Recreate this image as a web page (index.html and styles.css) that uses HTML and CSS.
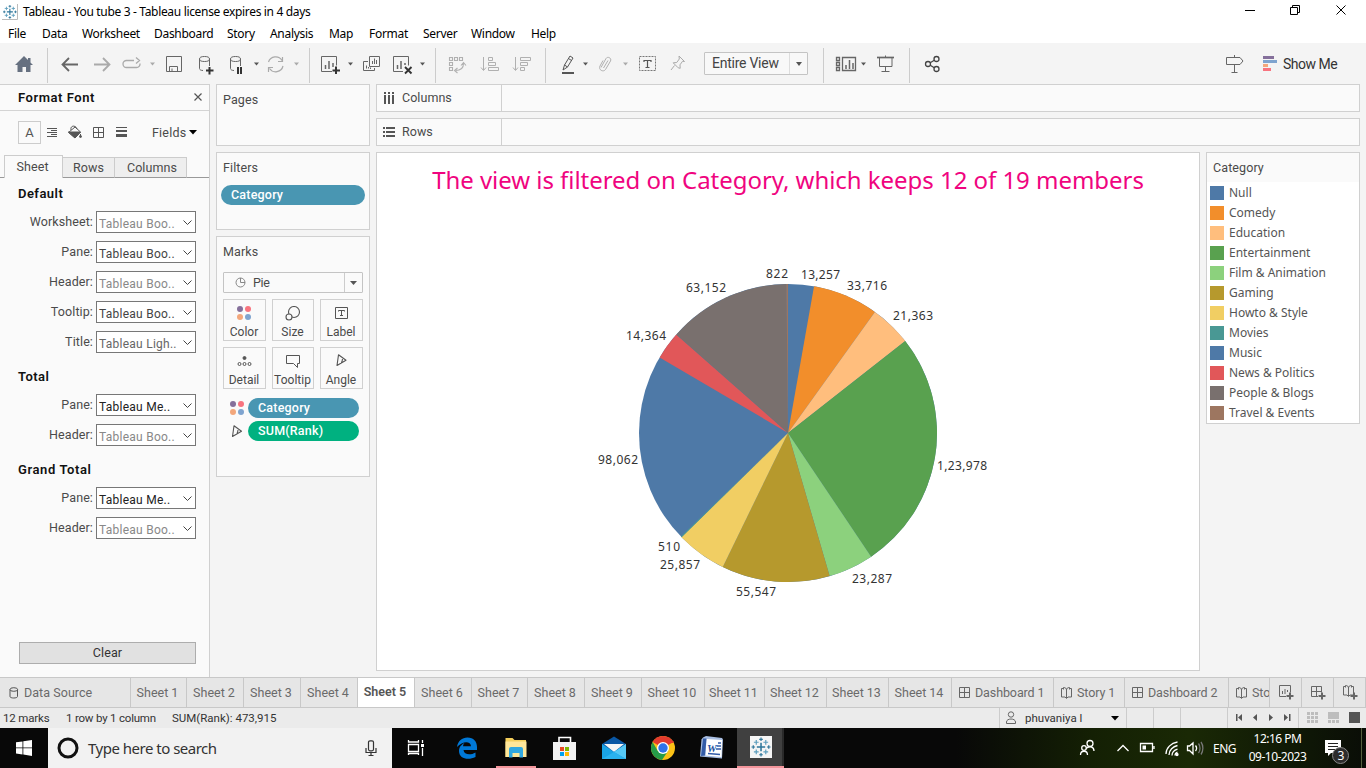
FILE: index.html
```html
<!DOCTYPE html>
<html lang="en">
<head>
<meta charset="utf-8">
<title>Tableau - You tube 3</title>
<link rel="stylesheet" href="styles.css">
</head>
<body>
<svg width="0" height="0" class="defs">
  <defs>
    <g id="tableau" fill="none" stroke="#2d7599">
      <path d="M8 4.500v7M4.500 8h7" stroke-width="1.300"/>
      <path d="M8 0v3M6.500 1.500h3M8 13v3M6.500 14.500h3M0 8h3M1.500 6.500v3M13 8h3M14.500 6.500v3"/>
      <path d="M4 2v4M2 4h4M12 2v4M10 4h4M4 10v4M2 12h4M12 10v4M10 12h4" stroke="#5b9dbd"/>
    </g>
    <g id="dots"><circle cx="3" cy="3" r="3" fill="#85709b"/><circle cx="11" cy="3" r="3" fill="#f8747f"/><circle cx="3" cy="11" r="3" fill="#f3a77c"/><circle cx="11" cy="11" r="3" fill="#7fa4cf"/></g>
    <g id="angle"><path d="M2.500.8L10 6.200 1 11.500zM6.500 3.500c.2 1.600-.3 4-1.200 5.800" fill="none" stroke="#555" stroke-width="1.100" stroke-linejoin="round"/></g>
    <g id="grid"><path d="M.5.5h10v10h-10zM5.500.5v10M.5 5.500h10" fill="none" stroke="#666"/></g>
    <g id="book"><path d="M.5 1.500v8.500h3.500l1.500 1.500L7 10h3.500V1.500M2.500.5c2 0 3 1 3 2.500v8M8.500.5c-2 0-3 1-3 2.500M2.500.5v2M8.500.5v2M.5 1.500h2M8.500 1.500h2" fill="none" stroke="#666"/></g>
    <path id="caret" d="M0 0h5L2.500 3z"/>
  </defs>
</svg>

<header class="titlebar">
  <svg class="app-icon" width="16" height="16" viewBox="0 0 16 16"><path d="M15.500 0v15.500H0" fill="none" stroke="#bbb"/><g transform="translate(1 1) scale(.86)"><use href="#tableau"/></g></svg>
  <span class="win-title">Tableau - You tube 3 - Tableau license expires in 4 days</span>
  <svg class="win-controls" width="126" height="22" viewBox="1240 0 126 22" fill="none" stroke="#000"><path d="M1245 10.500h10M1290.500 7.500h7v7h-7zM1292.500 7.500v-2h7v7h-2M1336.500 5.500l9 9M1345.500 5.500l-9 9"/></svg>
</header>

<nav class="menubar">
  <span class="m-file">File</span><span class="m-data">Data</span><span class="m-work">Worksheet</span><span class="m-dash">Dashboard</span><span class="m-story">Story</span><span class="m-ana">Analysis</span><span class="m-map">Map</span><span class="m-format">Format</span><span class="m-server">Server</span><span class="m-window">Window</span><span>Help</span>
</nav>

<div class="toolbar">
  <svg width="47" height="41" viewBox="0 43 47 41"><path d="M24 56l-9 9h2.500v7h5v-5h3.500v5h4.500v-7H33l-2.500-2.600V58H28v2z" fill="#667080"/></svg>
  <i class="sep"></i>
  <svg width="261" height="41" viewBox="48 43 261 41" fill="none" stroke="#666">
    <path d="M63 64.500h15M69 58l-6.500 6.500 6.500 6.500" stroke-width="1.800"/>
    <g stroke="#aaa"><path d="M94 64.500h15M103 58l6.500 6.500-6.500 6.500" stroke-width="1.800"/>
    <path d="M134 60.500h-7.500a3.500 3.500 0 0 0 0 7h10a3.500 3.500 0 0 0 3.500-4M136 57.500l3.500 3-3.500 3" stroke-width="1.300"/></g>
    <use href="#caret" x="150" y="62.500" fill="#aaa" stroke="none"/>
    <path d="M166.500 56.500h15v15h-15zM169.500 71v-4.500h8v4.500M172 71v-2.500"/>
    <path d="M199.500 59v9.500c0 1.200 1.500 2 3.500 2M209.500 59v7"/><ellipse cx="204.500" cy="59" rx="5" ry="2.500"/>
    <path d="M209.500 67v7.500M206 70.500h7.500" stroke="#333" stroke-width="2"/>
    <path d="M230.500 59v9.500c0 1.200 1.500 2 3.500 2M240.500 59v7"/><ellipse cx="235.500" cy="59" rx="5" ry="2.500"/>
    <path d="M238 67v7M241 67v7" stroke="#333" stroke-width="2"/>
    <use href="#caret" x="254" y="62.500" fill="#555" stroke="none"/>
    <path d="M268.500 62a7.500 7.500 0 0 1 13.500-1.500M283 66a7.500 7.500 0 0 1-13.500 2.500M282.500 57v4.500h-4.500M268.500 72v-4.500h4.500" stroke="#aaa" stroke-width="1.200"/>
    <use href="#caret" x="294" y="62.500" fill="#aaa" stroke="none"/>
  </svg>
  <i class="sep"></i>
  <svg width="125" height="41" viewBox="310 43 125 41" fill="none" stroke="#666">
    <path d="M332 71.500h-10.500v-15h15v9"/><path d="M325.500 65v4M329 61v8M333 63v4" stroke-width="1.500"/>
    <path d="M336 66.500v7.500M332.500 70.500h7.500" stroke="#333" stroke-width="2"/>
    <use href="#caret" x="348" y="62.500" fill="#555" stroke="none"/>
    <path d="M369.500 56.500h10v10h-10zM368 61.500h-4.500v9h11v-2.500M372.500 61v3M374.500 58.500v5.500M376.500 60v4M366.500 65.500v3M368.500 67v1.500M370.500 67.500v1.500"/>
    <path d="M403 71.500h-9.500v-15h15v9"/><path d="M397.500 65v4M401 61v8M405 63v2" stroke-width="1.500"/>
    <path d="M405 67l6.500 6.500M411.500 67L405 73.500" stroke="#333" stroke-width="1.900"/>
    <use href="#caret" x="420" y="62.500" fill="#555" stroke="none"/>
  </svg>
  <i class="sep"></i>
  <svg width="109" height="41" viewBox="436 43 109 41" fill="none" stroke="#b0b0b0">
    <path d="M449.500 57.500h3v3h-3zM454.500 57.500h3v3h-3zM459.500 57.500h3v3h-3zM449.500 62.500h3v3h-3zM449.500 67.500h3v3h-3zM463.500 63.500c0 4-2.500 7-8 7M461 65.500l2.500-3 2.500 3M457.500 68l-3 2.500 3 2.500" stroke-width="1.100"/>
    <path d="M483.500 57v13M481 67.500l2.500 3 2.500-3M488.500 57.500h4v3h-4zM488.500 62.500h7v3h-7zM488.500 67.500h10v3h-10z"/>
    <path d="M515.500 57v13M513 67.500l2.500 3 2.500-3M520.500 57.500h10v3h-10zM520.500 62.500h7v3h-7zM520.500 67.500h4v3h-4z"/>
  </svg>
  <i class="sep"></i>
  <svg width="158" height="41" viewBox="546 43 158 41" fill="none" stroke="#555">
    <path d="M563 70l1.500-5 5.500-9 3 2-5.500 9zM564.500 65l3 2M568.500 58.500l3 2"/><path d="M562 73h12" stroke-width="2"/>
    <use href="#caret" x="583" y="62.500" fill="#555" stroke="none"/>
    <path d="M601 67.500l5-9c1.500-2.500 6-.5 4.500 2.500l-5 8.500c-2 3-7.500.5-5.500-3.500l3-5.500M603.500 68l4.500-7.500" stroke="#b0b0b0"/>
    <use href="#caret" x="623" y="62.500" fill="#aaa" stroke="none"/>
    <path d="M639.500 56.500h16v14h-16z" stroke="#777" stroke-dasharray="2 1"/><path d="M644 62v-1.500h7V62M647.500 60.500v7M645.500 67.500h4" stroke-width="1.200"/>
    <path d="M679 56l5.500 5.500-2-.2-2.500 3.500.2 3.500-2-.5-5-5 3.500-.3 2.600-3.500zM674.500 65.500l-3.500 4.500" stroke="#aaa"/>
  </svg>
  <div class="view-select"><span>Entire View</span><b><svg width="6" height="4"><path d="M0 0h6L3 4z" fill="#555"/></svg></b></div>
  <i class="sep sep-view"></i>
  <svg width="85" height="41" viewBox="824 43 85 41" fill="none" stroke="#666">
    <path d="M836.500 57.500h3v3h-3zM836.500 62.500h3v3h-3zM836.500 67.500h3v3h-3zM842.500 57.500h13v13h-13z" stroke-width="1.300"/><path d="M846 65v4M849.500 60v9M853 63v6" stroke-width="1.500"/>
    <use href="#caret" x="861" y="62.500" fill="#555" stroke="none"/>
    <path d="M877 57.500h17" stroke-width="1.700"/><path d="M879.500 58v8.500h12.500V58M885.500 67v4M881.500 71.500h8M885.500 55.500v2"/>
  </svg>
  <i class="sep"></i>
  <svg width="60" height="41" viewBox="910 43 60 41" fill="none" stroke="#444" stroke-width="1.300"><circle cx="928" cy="64" r="2.500"/><circle cx="936.500" cy="59" r="2.500"/><circle cx="936.500" cy="69" r="2.500"/><path d="M930.200 62.800l4.100-2.500M930.200 65.200l4.100 2.500"/></svg>
  <svg class="toolbar-right" width="60" height="41" viewBox="1222 43 60 41" fill="none"><path d="M1226.500 57.500h13.500l3 3.500-3 3.500h-13.500zM1234.500 55v2M1234.500 65v7M1231.500 72.500h6" stroke="#666"/><path d="M1263 56h11v3h-11z" fill="#85709b"/><path d="M1263 60h14v3h-14z" fill="#7fa4cf"/><path d="M1263 64h5v3h-5z" fill="#f3a77c"/><path d="M1263 68h8v3h-8z" fill="#f8747f"/></svg>
  <span class="show-me">Show Me</span>
</div>

<main class="workspace">
  <aside class="format">
    <div class="format-head"><strong>Format Font</strong><svg width="8" height="8"><path d="M.5.5l7 7M7.500.5l-7 7" stroke="#555" stroke-width="1.200"/></svg></div>
    <div class="format-tools">
      <span class="font-btn">A</span>
      <svg width="108" height="24" viewBox="41 120 108 24" fill="none" stroke="#555">
        <path d="M47 128.500h10M51 130.500h6M47 132.500h10M51 134.500h6M47 136.500h10"/>
        <path d="M68.500 132.500l6.500-5.500 5.500 5-5.500 6z"/><path d="M68.500 132h12l-5.500 6z" fill="#555"/><path d="M71 130c-1-5 5-5 6-1M80.500 134v3" /><circle cx="80.500" cy="136.500" r="1" fill="#555"/>
        <path d="M93.500 127.500h10v10h-10zM98.500 127.500v10M93.500 132.500h10"/>
        <path d="M116 127.500h11"/><path d="M116 131h11" stroke-width="2"/><path d="M116 135.500h11" stroke-width="3"/>
      </svg>
      <span class="fields">Fields</span><svg width="8" height="5"><path d="M0 0h8L4 4.500z"/></svg>
    </div>
    <div class="format-tabs"><i class="lead"></i><span class="on">Sheet</span><span class="t-rows">Rows</span><span class="t-cols">Columns</span><i class="tail"></i></div>
    <section class="first"><h3>Default</h3>
      <div class="field"><label>Worksheet:</label><div class="sel dim">Tableau Boo..</div></div>
      <div class="field"><label>Pane:</label><div class="sel">Tableau Boo..</div></div>
      <div class="field"><label>Header:</label><div class="sel dim">Tableau Boo..</div></div>
      <div class="field"><label>Tooltip:</label><div class="sel">Tableau Boo..</div></div>
      <div class="field"><label>Title:</label><div class="sel mid">Tableau Ligh..</div></div>
    </section>
    <section><h3>Total</h3>
      <div class="field"><label>Pane:</label><div class="sel med">Tableau Me..</div></div>
      <div class="field"><label>Header:</label><div class="sel dim">Tableau Boo..</div></div>
    </section>
    <section><h3 class="grand">Grand Total</h3>
      <div class="field"><label>Pane:</label><div class="sel med">Tableau Me..</div></div>
      <div class="field"><label>Header:</label><div class="sel dim">Tableau Boo..</div></div>
    </section>
    <button class="clear">Clear</button>
  </aside>

  <div class="cards">
    <div class="card pages"><h4>Pages</h4></div>
    <div class="card filters"><h4>Filters</h4><div class="pill">Category</div></div>
    <div class="card marks"><h4>Marks</h4>
      <div class="mark-type"><svg width="11" height="11" viewBox="0 0 11 11" fill="none" stroke="#888"><circle cx="5.500" cy="5.500" r="4.500"/><path d="M5.500 1v4.500h4.500"/></svg><span>Pie</span><b><svg width="7" height="4"><path d="M0 0h7L3.500 4z" fill="#555"/></svg></b></div>
      <div class="mark-grid">
        <div><svg width="14" height="14"><use href="#dots"/></svg><span>Color</span></div>
        <div><svg width="16" height="15" fill="none" stroke="#555" stroke-width="1.100"><circle cx="9" cy="6" r="5.500"/><circle cx="4" cy="11" r="3" fill="#fafafa"/></svg><span>Size</span></div>
        <div><svg width="14" height="14" fill="none" stroke="#555"><path d="M1.500 1.500h12v11h-12zM4.500 5.500v-1h6v1M7.500 4.500v5M6 9.500h3"/></svg><span>Label</span></div>
        <div><svg width="15" height="14" fill="none" stroke="#555"><circle cx="7.500" cy="4" r="1.500" fill="#555"/><circle cx="2.500" cy="10" r="1.500"/><circle cx="7.500" cy="10" r="1.500"/><circle cx="12.500" cy="10" r="1.500"/></svg><span>Detail</span></div>
        <div><svg width="16" height="14" fill="none" stroke="#555"><path d="M1.500 1.500h13v8h-2v4l-4-4h-7z"/></svg><span>Tooltip</span></div>
        <div><svg width="11" height="13"><use href="#angle"/></svg><span>Angle</span></div>
      </div>
      <div class="mark-row"><svg width="14" height="14"><use href="#dots"/></svg><div class="pill">Category</div></div>
      <div class="mark-row"><svg width="14" height="13"><use href="#angle" x="1.500"/></svg><div class="pill green">SUM(Rank)</div></div>
    </div>
  </div>

  <div class="canvas">
    <div class="shelf"><div class="shelf-name"><svg width="12" height="12" stroke="#555" stroke-width="2"><path d="M2 0v2M2 3v9M6 0v2M6 3v9M10 0v2M10 3v9"/></svg><span>Columns</span></div></div>
    <div class="shelf"><div class="shelf-name"><svg width="12" height="12" stroke="#555" stroke-width="2"><path d="M0 2h2M3 2h9M0 6h2M3 6h9M0 10h2M3 10h9"/></svg><span>Rows</span></div></div>
    <div class="view-row">
      <div class="sheet">
        <h1>The view is filtered on Category, which keeps 12 of 19 members</h1>
        <svg class="pie" width="822" height="440" viewBox="377 210 822 440">
          <circle cx="788" cy="433" r="149" fill="#4e79a7"/>
          <path fill="#f28e2b" d="M788 433L814.050 286.300A149 149 0 0 1 874.910 311.970z"/>
          <path fill="#ffbe7d" d="M788 433L874.910 311.970A149 149 0 0 1 905.270 341.080z"/>
          <path fill="#59a14f" d="M788 433L905.270 341.080A149 149 0 0 1 871.130 556.660z"/>
          <path fill="#8cd17d" d="M788 433L871.130 556.660A149 149 0 0 1 829.630 576.070z"/>
          <path fill="#b6992d" d="M788 433L829.630 576.070A149 149 0 0 1 722.750 566.950z"/>
          <path fill="#f1ce63" d="M788 433L722.750 566.950A149 149 0 0 1 681.520 537.220z"/>
          <path fill="#499894" d="M788 433L681.520 537.220A149 149 0 0 1 680.820 536.500z"/>
          <path fill="#e15759" d="M788 433L659.610 357.390A149 149 0 0 1 676.240 334.460z"/>
          <path fill="#79706e" d="M788 433L676.240 334.460A149 149 0 0 1 786.370 284.010z"/>
          <path fill="#9d7660" d="M788 433L786.370 284.010A149 149 0 0 1 788 284z"/>
          <g class="pie-labels">
            <text x="766" y="278" textLength="22">822</text><text x="801" y="279" textLength="39">13,257</text><text x="847" y="290" textLength="40">33,716</text><text x="893" y="320" textLength="40">21,363</text><text x="937" y="470" textLength="50">1,23,978</text><text x="852" y="583" textLength="40">23,287</text><text x="736" y="596" textLength="40">55,547</text><text x="660" y="569" textLength="40">25,857</text><text x="658" y="551" textLength="22">510</text><text x="598" y="464" textLength="40">98,062</text><text x="626" y="340" textLength="40">14,364</text><text x="686" y="292" textLength="40">63,152</text>
          </g>
        </svg>
      </div>
      <div class="legend"><h4>Category</h4>
        <ul><li class="c-null">Null</li><li class="c-comedy">Comedy</li><li class="c-edu">Education</li><li class="c-ent">Entertainment</li><li class="c-film">Film &amp; Animation</li><li class="c-game">Gaming</li><li class="c-howto">Howto &amp; Style</li><li class="c-movies">Movies</li><li class="c-music">Music</li><li class="c-news">News &amp; Politics</li><li class="c-people">People &amp; Blogs</li><li class="c-travel">Travel &amp; Events</li></ul>
      </div>
    </div>
  </div>
</main>

<div class="tabs">
  <div class="tab source"><svg width="10" height="12" fill="none" stroke="#555"><path d="M1 2.500v7c0 2 7.500 2 7.500 0v-7"/><ellipse cx="4.800" cy="2.500" rx="3.800" ry="1.800"/></svg>Data Source</div>
  <div class="tab w56">Sheet 1</div><div class="tab w57">Sheet 2</div><div class="tab w57">Sheet 3</div><div class="tab w57">Sheet 4</div><div class="tab w57 current">Sheet 5</div><div class="tab w57">Sheet 6</div><div class="tab w56">Sheet 7</div><div class="tab w57">Sheet 8</div><div class="tab w57">Sheet 9</div><div class="tab w63">Sheet 10</div><div class="tab w60">Sheet 11</div><div class="tab w62">Sheet 12</div><div class="tab w62">Sheet 13</div><div class="tab w63">Sheet 14</div>
  <div class="tab dash1"><svg width="11" height="11"><use href="#grid"/></svg>Dashboard 1</div>
  <div class="tab story1"><svg width="11" height="12"><use href="#book"/></svg>Story 1</div>
  <div class="tab dash2"><svg width="11" height="11"><use href="#grid"/></svg>Dashboard 2</div>
  <div class="tab story2"><svg width="11" height="12"><use href="#book"/></svg>Sto</div>
  <div class="tab new"><svg width="16" height="15" fill="none" stroke="#666"><path d="M8 11.500H1.500V.5h11v7M4.500 6v3M7 4v5M9.500 5v2"/><path d="M12 7.500v7M8.500 11h7" stroke-width="2"/></svg></div>
  <div class="tab new"><svg width="16" height="15" fill="none" stroke="#666"><path d="M8 11.500H1.500V1.500h10v6M6.500 1.500V11M1.500 6.500h10"/><path d="M12 7.500v7M8.500 11h7" stroke-width="2"/></svg></div>
  <div class="tab new"><svg width="16" height="15" fill="none" stroke="#666"><use href="#book" x="1"/><path d="M12 7.500v7M8.500 11h7" stroke-width="2"/></svg></div>
</div>

<div class="status">
  <span class="s-marks">12 marks</span><span class="s-rows">1 row by 1 column</span><span class="s-sum">SUM(Rank): 473,915</span>
  <div class="user"><svg width="12" height="14" fill="none" stroke="#666"><circle cx="6" cy="3.500" r="2.700"/><path d="M1.500 12.500V11c0-4 9-4 9 0v1.500z"/></svg><span>phuvaniya l</span><svg width="8" height="5"><path d="M0 0h8L4 4.500z"/></svg></div>
  <i class="cell c27"></i><i class="cell c27"></i><i class="cell c47"></i>
  <svg class="pager" width="70" height="20" viewBox="1228 708 70 20" fill="#555"><path d="M1236 714h1.500v7h-1.500zM1242 714v7l-4-3.500zM1257 714v7l-4-3.500zM1269 714v7l4-3.500zM1284 714v7l4-3.500zM1289 714h1.500v7h-1.500z"/></svg>
  <svg width="67" height="20" viewBox="1299 708 67 20" fill="#bdbdbd"><path d="M1307 712h3v3h-3zM1311 712h3v3h-3zM1315 712h3v3h-3zM1307 716h3v3h-3zM1311 716h3v3h-3zM1315 716h3v3h-3zM1307 720h3v3h-3zM1311 720h3v3h-3zM1315 720h3v3h-3zM1328 712h11v7h-11zM1328 720h3v3h-3zM1332 720h3v3h-3zM1336 720h3v3h-3z"/><path d="M1349 712h11v11h-11z" fill="#555"/></svg>
</div>

<footer class="taskbar">
  <svg width="48" height="40" viewBox="0 728 48 40" fill="#fff"><path d="M16 742.300l6.500-.9v6.100H16zM23.300 741.300l8.700-1.300v7.500h-8.700zM16 748.300h6.500v6.200l-6.500-.9zM23.300 748.300H32v7.600l-8.700-1.300z"/></svg>
  <div class="search"><svg width="22" height="22"><circle cx="11" cy="11" r="9" fill="none" stroke="#111" stroke-width="3"/></svg><span>Type here to search</span><svg width="12" height="17" fill="none" stroke="#333" stroke-width="1.200"><rect x="3.500" y=".8" width="5" height="10" rx="1.500"/><path d="M1 8v4.500h10V8M6 12.500V16M3.500 15.500h5"/></svg></div>
  <svg width="392" height="40" viewBox="392 728 392 40">
    <g fill="none" stroke="#fff" stroke-width="1.300"><path d="M408.500 744.500h10v7h-10zM408.500 740v2h10v-2M408.500 755v-1.500h10v1.500M422.500 740v3M422.500 748v8"/></g><path d="M421 744h3v3h-3z" fill="#fff"/>
    <path fill="#0078d7" d="M457 747c1-6 5-9.500 10.500-9.500 6 0 9.500 4 9.500 9.500v3h-13.500c.5 5 7 5.500 12 2.500v4.500c-7 3.500-16.500 2-16.500-6 0-4 2.500-6.500 5.500-8-1 1-1.300 2-1.400 3.200h7.900c-.2-5.500-8.500-5.500-14 .8z"/>
    <path d="M505.500 738h7l2 2h11.500v17h-20.500z" fill="#f5cf5c"/><path d="M505.500 741.500h21V757h-21z" fill="#ffe79a"/><path d="M509 757.500V749q0-2 2-2h10q2 0 2 2v8.500h-3.500V753h-7v4.500z" fill="#31a8e0"/><path d="M496 766h40v2h-40z" fill="#f3959b"/>
    <path d="M559 743v-5.500h11.500v5.500" fill="none" stroke="#fff" stroke-width="1.600"/><path d="M553 742h23v18h-23z" fill="#f2f2f2"/><path d="M560 747h4v4h-4z" fill="#e74822"/><path d="M565 747h4v4h-4z" fill="#7db700"/><path d="M560 752h4v4h-4z" fill="#00a1ef"/><path d="M565 752h4v4h-4z" fill="#ffb801"/>
    <path d="M602 744l12-7.500 12 7.500v15h-24z" fill="#0a57a4"/><path d="M604 744h20l-10 8z" fill="#f6f6f6"/><path d="M602 744l12 8 12-8v15h-24z" fill="#19a3e5"/><path d="M614 752l12-8v15z" fill="#55c8f5"/><path d="M602 759l12-7 12 7z" fill="#2ab2ef"/>
    <circle cx="663" cy="748" r="12" fill="#fbc116"/><path d="M663 748L652.600 742A12 12 0 0 1 673.400 742z" fill="#e33b2e"/><path d="M657.800 751L668 751 662 760A12 12 0 0 1 652.600 742z" fill="#269b48"/><path d="M663 742h10.400" stroke="#e33b2e" stroke-width="2"/><circle cx="663" cy="748" r="6" fill="#fff"/><circle cx="663" cy="748" r="4.700" fill="#2f73e9"/>
    <path d="M703 737.500l3-1.500 16 2 1 1.500-1 19-22-2 1.500-17z" fill="#aabfe3"/><path d="M706.500 739l15.500 1-.5 17-16-1.500z" fill="#fff"/><path d="M703 738.500l3.500 0-1.500 17-4 .5z" fill="#345ca7"/><text x="707" y="752" class="word">W</text><path d="M718 743h3M717 746h4M716 749h5M708 753.500l12 1" stroke="#315ba8" stroke-width="1.300"/>
    <path d="M737 728h45v40h-45z" fill="#404040"/><path d="M782 728h3v40h-3z" fill="#2a2a2a"/><path d="M737 766h47v2h-47z" fill="#f3959b"/><path d="M750 736h22v22h-22z" fill="#f5f5f5"/><g transform="translate(751.500 737.500) scale(1.190)"><use href="#tableau"/></g>
  </svg>
  <svg class="tray" width="140" height="40" viewBox="1070 728 140 40" fill="none" stroke="#fff" stroke-width="1.300">
    <circle cx="1090" cy="743.500" r="3"/><circle cx="1084" cy="748" r="2.300"/><path d="M1080.500 755c0-5 7-5 7 0M1086 748.500c3-3 8-2 8 2.500"/>
    <path d="M1117.500 751l5.500-5.500 5.500 5.500"/><path d="M1140.500 743.500h12v8h-12zM1154 746v3"/><path d="M1142.500 745.500h3.500v4h-3.500z" fill="#fff" stroke="none"/>
    <path d="M1166 754c0-6 5-11 11.500-12M1169 755c0-5 4-8.500 8.500-9.500M1172 755.500c0-3 2-5.500 5.500-6.500M1175 755.500c0-1.500 1-3 2.500-3.500"/><circle cx="1177" cy="754.500" r="1" fill="#fff"/>
    <path d="M1187.500 746v4.500h2l3.500 3.500v-11l-3.500 3zM1195.500 745.500c1.200 1.500 1.200 4 0 5.500"/><path d="M1198.500 743.500c2 2.500 2 7 0 9.500M1201 742c2.500 3.500 2.500 9 0 12.500" stroke="#777"/>
  </svg>
  <span class="lang">ENG</span>
  <div class="clock"><span>12:16 PM</span><span>09-10-2023</span></div>
  <svg width="46" height="40" viewBox="1320 728 46 40"><path d="M1325 740h16v13h-10l-3 3v-3h-3z" fill="#fff"/><path d="M1328 743.500h10M1328 746.500h10M1328 749.500h7" stroke="#222"/><circle cx="1340.500" cy="755.500" r="8" fill="#2c2c2c" stroke="#888"/><text x="1337.500" y="760" class="badge">3</text><path d="M1361.500 728v40" stroke="#55603f"/></svg>
</footer>
</body>
</html>
```
FILE: styles.css
```css
* { box-sizing: border-box; }
body { margin: 0; width: 1366px; height: 768px; overflow: hidden; display: flex; flex-direction: column; background: #f4f4f4; font-family: Roboto, sans-serif; font-size: 12.5px; color: #4a4a4a; }
svg { display: block; flex: none; }
.defs { display: none; }
h1, h3, h4, ul { margin: 0; padding: 0; font-weight: 400; }

.titlebar { height: 22px; background: #fff; display: flex; align-items: center; font-family: "Noto Sans", sans-serif; font-size: 12px; color: #000; padding-left: 2px; }
.app-icon { margin-top: 1px; }
.win-title { margin-left: 5px; white-space: nowrap; letter-spacing: -.33px; }
.win-controls { margin-left: auto; }
.menubar { height: 21px; background: #fff; display: flex; align-items: center; padding: 2px 0 0 8px; font-family: "Noto Sans", sans-serif; font-size: 12px; letter-spacing: -.3px; color: #000; }
.menubar span { white-space: nowrap; }
.m-file { width: 34px; } .m-data { width: 40px; } .m-work { width: 72px; } .m-dash { width: 73px; } .m-story { width: 43px; } .m-ana { width: 59px; } .m-map { width: 40px; } .m-format { width: 54px; } .m-server { width: 48px; } .m-window { width: 60px; }

.toolbar { height: 41px; display: flex; align-items: center; }
.sep { width: 1px; height: 35px; background: #ccc; flex: none; margin-top: 3px; }
.view-select { width: 104px; height: 23px; border: 1px solid #c4c4c4; background: #f8f8f8; display: flex; font-size: 14px; color: #444; line-height: 20px; border-radius: 1px; }
.view-select span { flex: 1; padding-left: 7px; white-space: nowrap; letter-spacing: -.25px; }
.view-select b { width: 18px; border-left: 1px solid #ddd; display: flex; align-items: center; justify-content: center; }
.sep-view { margin-left: 15px; }
.toolbar-right { margin-left: auto; }
.show-me { font-size: 14px; color: #333; width: 84px; padding-left: 1px; letter-spacing: -.5px; }

.workspace { height: 593px; display: flex; }
.format { width: 210px; background: #fafafa; border-top: 1px solid #d0d0d0; border-right: 1px solid #d0d0d0; display: flex; flex-direction: column; }
.format-head { height: 26px; border-bottom: 1px solid #d4d4d4; display: flex; justify-content: space-between; align-items: center; padding: 0 7px 1px 18px; }
.format-head strong { font-size: 13px; font-weight: 600; color: #111; letter-spacing: .55px; }
.format-tools { height: 44px; display: flex; align-items: center; padding: 0 0 2px 18px; }
.font-btn { width: 23px; height: 23px; border: 1px solid #ccc; display: flex; align-items: center; justify-content: center; font-size: 13px; color: #555; }
.fields { width: 37px; margin-left: 3px; letter-spacing: .2px; }
.format-tabs { height: 23px; display: flex; align-items: flex-end; }
.format-tabs span { height: 21px; border: 1px solid #ccc; border-bottom-color: #999; border-left: 0; background: #eee; display: flex; align-items: center; justify-content: center; letter-spacing: .1px; }
.format-tabs .on { width: 59px; height: 23px; border: 1px solid #ccc; border-bottom: 0; background: #fafafa; padding: 0 2px 2px 0; }
.format-tabs .t-rows { width: 52px; } .format-tabs .t-cols { width: 72px; padding-left: 3px; }
.lead { width: 4px; border-bottom: 1px solid #999; height: 1px; } .tail { flex: 1; border-bottom: 1px solid #999; height: 1px; }
.format section { margin-top: 13px; display: flex; flex-direction: column; gap: 8px; }
.format section.first { margin-top: 5px; }
.format h3 { height: 22px; line-height: 22px; padding-left: 18px; font-size: 13px; font-weight: 600; color: #111; margin-bottom: -2px; letter-spacing: .45px; }
.format h3.grand { letter-spacing: .6px; }
.field { height: 22px; display: flex; padding-right: 13px; }
.field label { flex: 1; text-align: right; padding-right: 3px; line-height: 22px; letter-spacing: .1px; }
.sel { width: 100px; border: 1px solid #777; background: #fff url("data:image/svg+xml,%3Csvg xmlns='http://www.w3.org/2000/svg' width='9' height='6'%3E%3Cpath d='M.5.500l4 4 4-4' fill='none' stroke='%23444'/%3E%3C/svg%3E") no-repeat 86px 8px; padding-left: 2px; line-height: 24px; font-size: 12px; letter-spacing: .25px; color: #444; white-space: nowrap; }
.sel.dim { color: #888; } .sel.mid { color: #666; } .sel.med { color: #222; }
.clear { width: 177px; height: 22px; margin: auto 0 13px 19px; border: 1px solid #adadad; background: #e1e1e1; font: 12.5px Roboto, sans-serif; letter-spacing: .1px; color: #333; padding: 0 0 1px; }

.cards { width: 154px; margin-left: 6px; display: flex; flex-direction: column; gap: 6px; }
.card { border: 1px solid #d0d0d0; background: #fafafa; }
.card h4 { height: 32px; line-height: 29px; padding-left: 6px; letter-spacing: .1px; }
.pages { height: 62px; } .filters { height: 78px; } .marks { height: 241px; }
.pill { height: 20px; border-radius: 10px; background: #4996b2; color: #fff; font-weight: 500; font-size: 12.500px; line-height: 20px; padding-left: 10px; letter-spacing: .2px; }
.filters .pill { margin: 0 4px; }
.pill.green { background: #00b180; }
.mark-type { height: 21px; width: 140px; margin: 3px 0 6px 6px; border: 1px solid #c4c4c4; display: flex; align-items: center; padding-left: 11px; border-radius: 1px; }
.mark-type span { flex: 1; padding-left: 7px; letter-spacing: -.3px; }
.mark-type b { width: 18px; height: 19px; border-left: 1px solid #ccc; display: flex; align-items: center; justify-content: center; }
.mark-grid { display: grid; grid-template-columns: 43px 42px 43px; gap: 6px; margin-left: 6px; }
.mark-grid div { height: 42px; border: 1px solid #d0d0d0; display: flex; flex-direction: column; align-items: center; justify-content: space-between; padding: 6px 1px 0 0; font-size: 12px; letter-spacing: 0; }
.mark-grid div span { line-height: 15px; }
.mark-row { display: flex; align-items: center; padding-left: 13px; margin-top: 3px; }
.mark-grid + .mark-row { margin-top: 9px; }
.mark-row .pill { width: 111px; margin-left: 4px; }

.canvas { width: 984px; margin-left: 6px; display: flex; flex-direction: column; gap: 6px; }
.shelf { height: 28px; border: 1px solid #d0d0d0; background: #fafafa; }
.shelf-name { width: 125px; height: 26px; border-right: 1px solid #d0d0d0; display: flex; align-items: center; gap: 7px; padding-left: 6px; letter-spacing: .05px; }
.shelf-name span { padding-bottom: 1px; }
.view-row { display: flex; align-items: flex-start; gap: 6px; }
.sheet { width: 824px; height: 519px; border: 1px solid #d0d0d0; background: #fff; }
.sheet h1 { height: 57px; line-height: 54px; text-align: center; font-family: "Noto Sans", sans-serif; font-size: 24px; letter-spacing: -.04px; color: #f0047f; white-space: nowrap; }
.pie-labels { font-family: "Noto Sans", sans-serif; font-size: 12px; fill: #333; }
.legend { width: 154px; height: 272px; border: 1px solid #d0d0d0; background: #fff; }
.legend h4 { height: 29px; line-height: 30px; padding-left: 6px; background: #fafafa; letter-spacing: .1px; }
.legend ul { padding-top: 1px; }
.legend li { list-style: none; height: 20px; line-height: 20px; display: flex; align-items: center; gap: 5px; padding-left: 3px; font-family: "Noto Sans", sans-serif; font-size: 12px; color: #555; white-space: nowrap; letter-spacing: 0; }
.legend li::before { content: ""; width: 14px; height: 14px; background: #4e79a7; }
.legend .c-comedy::before { background: #f28e2b; } .legend .c-edu::before { background: #ffbe7d; } .legend .c-ent::before { background: #59a14f; } .legend .c-film::before { background: #8cd17d; } .legend .c-game::before { background: #b6992d; } .legend .c-howto::before { background: #f1ce63; } .legend .c-movies::before { background: #499894; } .legend .c-news::before { background: #e15759; } .legend .c-people::before { background: #79706e; } .legend .c-travel::before { background: #9d7660; }

.tabs { height: 31px; border-top: 1px solid #c8c8c8; border-bottom: 1px solid #c8c8c8; background: #e6e6e6; display: flex; }
.tab { flex: none; border-right: 1px solid #c8c8c8; display: flex; align-items: center; justify-content: center; color: #6a6a6a; letter-spacing: 0; white-space: nowrap; overflow: hidden; padding-right: 2px; }
.source { width: 131px; justify-content: flex-start; padding-left: 9px; gap: 5px; letter-spacing: .05px; }
.w56 { width: 56px; } .w57 { width: 57px; } .w60 { width: 60px; } .w62 { width: 62px; } .w63 { width: 63px; }
.current { background: #fff; font-weight: 600; color: #555; padding-bottom: 2px; }
.dash1, .story1, .dash2, .story2 { justify-content: flex-start; gap: 5px; padding-left: 7px; padding-right: 0; letter-spacing: -.1px; }
.dash1 { width: 102px; } .story1 { width: 71px; } .dash2 { width: 104px; } .story2 { width: 41px; }
.new { width: 32px; padding-right: 0; }

.status { height: 20px; background: #ebebeb; display: flex; align-items: center; font-size: 11.500px; color: #333; padding-left: 3px; white-space: nowrap; }
.s-marks { width: 63px; letter-spacing: -.15px; } .s-rows { width: 106px; letter-spacing: -.2px; } .s-sum { flex: 1; }
.user { width: 128px; height: 20px; border: 1px solid #ccc; border-width: 0 1px; display: flex; align-items: center; padding-left: 5px; }
.user span { width: 94px; padding-left: 8px; }
.cell { height: 20px; border-right: 1px solid #ccc; } .c27 { width: 27px; } .c47 { width: 47px; }
.pager { margin-right: 1px; box-shadow: 1px 0 #ccc; }

.taskbar { height: 40px; display: flex; align-items: center; background: linear-gradient(90deg, #080808 0, #080808 70%, #142004 80%, #1a2905 87%, #0e1606 96%, #0a0d07); font-family: "Noto Sans", sans-serif; color: #fff; }
.search { width: 344px; height: 40px; background: #f2f2f2; display: flex; align-items: center; padding-left: 9px; color: #333; font-size: 15px; }
.search span { flex: 1; padding-left: 9px; letter-spacing: -.5px; }
.search svg:last-child { margin-right: 15px; }
.word { font: italic bold 11px "Liberation Serif", serif; fill: #24519e; }
.tray { margin-left: auto; }
.lang { width: 36px; padding-left: 3px; font-size: 12px; letter-spacing: -.5px; }
.clock { width: 74px; display: flex; flex-direction: column; align-items: center; font-size: 12px; line-height: 18px; letter-spacing: -.5px; padding-right: 11px; }
.badge { font: 12px "Noto Sans", sans-serif; fill: #fff; }
```
